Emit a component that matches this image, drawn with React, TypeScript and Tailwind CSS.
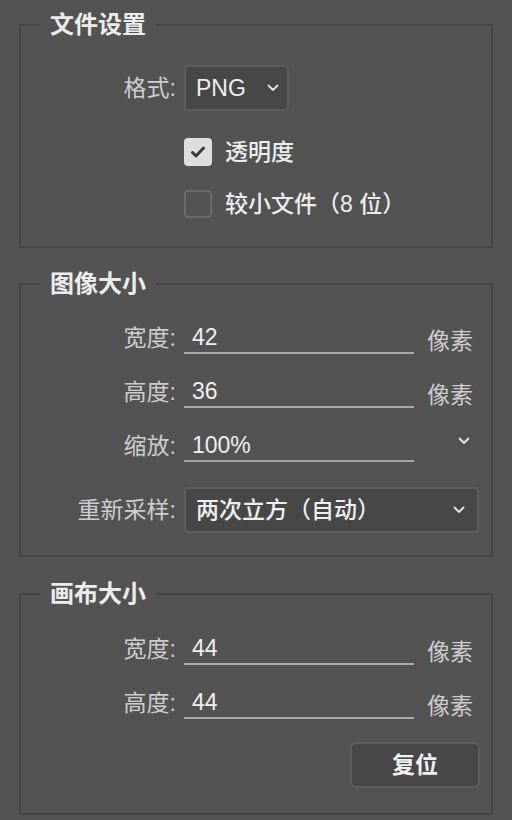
import React, { useState } from 'react';

const font = { fontFamily: '"Liberation Sans", "Noto Sans CJK SC", sans-serif' };

const Chevron: React.FC = () => (
  <svg width="12" height="8" viewBox="0 0 12 8" fill="none" className="shrink-0">
    <path d="M1.5 1.5 L6 6 L10.5 1.5" stroke="#e6e6e6" strokeWidth="1.8" strokeLinecap="round" strokeLinejoin="round" />
  </svg>
);

const Section: React.FC<{ title: string; className?: string; children: React.ReactNode }> = ({ title, className, children }) => (
  <fieldset className={`mx-[19px] border-2 border-[#454545] ${className || ''}`}>
    <legend className="ml-[19px] px-[10px] text-[24px] leading-[34px] font-bold text-[#ececec]">{title}</legend>
    {children}
  </fieldset>
);

const FieldRow: React.FC<{ label: string; value: string; unit?: string; dropdown?: boolean }> = ({ label, value, unit, dropdown }) => (
  <div className="flex items-center h-[32px]">
    <span className="w-[155px] text-right text-[23px] text-[#cdcdcd]">{label}</span>
    <div className="ml-[8px] w-[230px] h-[32px] border-b-2 border-[#a9a9a9] flex items-center pl-[8px] text-[23px] font-medium text-[#efefef]">
      {value}
    </div>
    {unit && <span className="ml-[13px] mt-[6px] text-[23px] text-[#cdcdcd]">{unit}</span>}
    {dropdown && (
      <span className="ml-[44px] mb-[10px]">
        <Chevron />
      </span>
    )}
  </div>
);

const Checkbox: React.FC<{ checked: boolean; label: string; onToggle: () => void }> = ({ checked, label, onToggle }) => (
  <div className="flex items-center h-[28px] cursor-pointer" onClick={onToggle}>
    <div className="w-[155px]" />
    <div
      className={`ml-[8px] w-[28px] h-[28px] rounded-[4px] flex items-center justify-center ${
        checked ? 'bg-[#dedede]' : 'border-2 border-[#6b6b6b]'
      }`}
    >
      {checked && (
        <svg width="16" height="14" viewBox="0 0 16 14" fill="none">
          <path d="M2.5 7.5 L6 11 L13.5 3" stroke="#3a3a3a" strokeWidth="3" strokeLinecap="round" strokeLinejoin="round" />
        </svg>
      )}
    </div>
    <span className="ml-[13px] text-[23px] font-medium text-[#ededed]">{label}</span>
  </div>
);

export default function App() {
  const [transparent, setTransparent] = useState(true);
  const [smaller, setSmaller] = useState(false);

  return (
    <div className="w-[512px] h-[820px] bg-[#535353] pt-[8px] overflow-hidden" style={font}>
      <Section title="文件设置" className="pt-[23px] pb-[28px]">
        <div className="flex items-center">
          <span className="w-[155px] text-right text-[23px] text-[#cdcdcd]">格式:</span>
          <div className="ml-[8px] w-[105px] h-[46px] rounded-[5px] bg-[#474747] border-2 border-[#5d5d5d] flex items-center justify-between pl-[10px] pr-[8px]">
            <span className="text-[23px] font-medium text-[#efefef]">PNG</span>
            <Chevron />
          </div>
        </div>
        <div className="mt-[27px] flex flex-col gap-[24px]">
          <Checkbox checked={transparent} label="透明度" onToggle={() => setTransparent(!transparent)} />
          <Checkbox checked={smaller} label="较小文件（8 位）" onToggle={() => setSmaller(!smaller)} />
        </div>
      </Section>

      <Section title="图像大小" className="mt-[19px] pt-[21px] pb-[22px]">
        <div className="flex flex-col gap-[22px]">
          <FieldRow label="宽度:" value="42" unit="像素" />
          <FieldRow label="高度:" value="36" unit="像素" />
          <FieldRow label="缩放:" value="100%" dropdown />
        </div>
        <div className="mt-[25px] flex items-center">
          <span className="w-[155px] text-right text-[23px] text-[#cdcdcd]">重新采样:</span>
          <div className="ml-[8px] w-[295px] h-[46px] rounded-[5px] bg-[#474747] border-2 border-[#5d5d5d] flex items-center justify-between pl-[10px] pr-[12px]">
            <span className="text-[23px] font-medium text-[#efefef]">两次立方（自动）</span>
            <Chevron />
          </div>
        </div>
      </Section>

      <Section title="画布大小" className="mt-[20px] pt-[22px] pb-[25px]">
        <div className="flex flex-col gap-[22px]">
          <FieldRow label="宽度:" value="44" unit="像素" />
          <FieldRow label="高度:" value="44" unit="像素" />
        </div>
        <div className="mt-[23px] flex justify-end pr-[11px]">
          <button className="w-[130px] h-[46px] rounded-[6px] bg-[#474747] border-2 border-[#5d5d5d] text-[23px] font-bold text-[#efefef]">
            复位
          </button>
        </div>
      </Section>
    </div>
  );
}
